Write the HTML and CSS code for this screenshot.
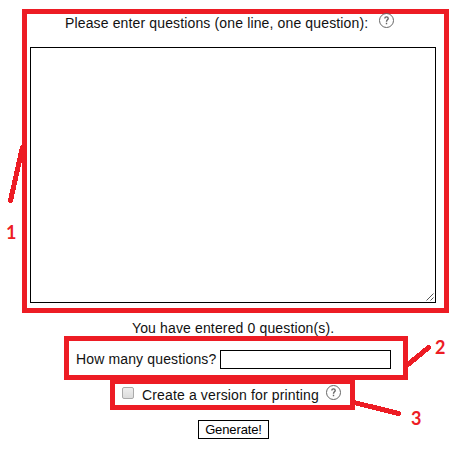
FILE: index.html
```html
<!DOCTYPE html>
<html lang="en">
<head>
<meta charset="utf-8">
<title>Question generator</title>
<link rel="stylesheet" href="styles.css">
</head>
<body>
<main class="form">
  <section class="frame frame-questions">
    <div class="row title">
      <label for="questions">Please enter questions (one line, one question):</label>
      <svg class="help" width="15" height="15" viewBox="0 0 15 15"><circle cx="7.500" cy="7.500" r="7"/><path d="M5.800 5.400C5.800 3.400 9.200 3.400 9.200 5.400C9.200 6.900 7.500 6.800 7.500 8.700M7.500 9.800V11.200"/></svg>
    </div>
    <div class="editor">
      <textarea id="questions" class="questions"></textarea>
      <svg class="grip" width="8" height="8" viewBox="0 0 8 8"><path d="M.5 7.5L7.5 .5M4.5 7.5L7.5 4.5"/></svg>
    </div>
  </section>
  <p class="count">You have entered 0 question(s).</p>
  <section class="frame frame-amount">
    <label for="amount">How many questions?</label>
    <input id="amount" class="amount" type="text">
  </section>
  <section class="frame frame-print">
    <input id="print" class="check" type="checkbox">
    <label for="print">Create a version for printing</label>
    <svg class="help" width="15" height="15" viewBox="0 0 15 15"><circle cx="7.500" cy="7.500" r="7"/><path d="M5.800 5.400C5.800 3.400 9.200 3.400 9.200 5.400C9.200 6.900 7.500 6.800 7.500 8.700M7.500 9.800V11.200"/></svg>
  </section>
  <button class="generate" type="button">Generate!</button>
</main>
<svg class="pointers" width="469" height="452" viewBox="0 0 469 452"><path d="M22.500 147L10.500 200.500M408 364.500L428.500 347.500M354 402.500L398.500 413.500"/></svg>
<span class="mark mark-1">1</span>
<span class="mark mark-2">2</span>
<span class="mark mark-3">3</span>
</body>
</html>
```
FILE: styles.css
```css
* { box-sizing: border-box; }
body {
  margin: 0;
  width: 469px;
  height: 452px;
  position: relative;
  overflow: hidden;
  background: #fff;
  color: #111;
  font: 14px/16px "Liberation Sans", Arial, sans-serif;
  letter-spacing: .14px;
}
.form { display: flex; flex-direction: column; align-items: flex-start; padding-top: 9px; }
.frame { border: 5px solid #ed1c24; display: flex; }
.frame-questions { flex-direction: column; width: 427px; height: 304px; margin-left: 22px; padding-left: 3px; }
.row { display: flex; }
.title { height: 33px; padding: 1px 0 0 35px; }
.title label { width: 305px; white-space: nowrap; }
.title .help { margin: -2px 0 0 9px; }
.help { flex: none; fill: none; stroke: #666; stroke-width: 1; }
.help path { stroke-width: 1.4; }
.editor { position: relative; width: 406px; height: 256px; }
.questions {
  display: block;
  width: 100%;
  height: 100%;
  border: 1px solid #000;
  resize: none;
  outline: 0;
}
.grip { position: absolute; right: 2px; bottom: 2px; fill: none; stroke: #555; stroke-width: 1; }
.count { margin: 7px 0 0 132px; height: 16px; }
.frame-amount { width: 344px; height: 44px; margin-left: 64px; padding: 10px 0 0 7px; white-space: nowrap; }
.frame-amount label { width: 144px; }
.amount { width: 171px; height: 19px; margin: -1px 0 0; border: 1px solid #000; padding: 0 2px; }
.frame-print { width: 245px; height: 31px; margin: -1px 0 0 110px; padding: 3px 0 0 7px; white-space: nowrap; }
.frame-print label { width: 177px; margin-left: 8px; }
.frame-print .help { margin: -2px 0 0 7px; }
.check {
  appearance: none;
  flex: none;
  width: 12px;
  height: 12px;
  margin: 0;
  border: 1px solid #aaa;
  border-radius: 2px;
  background: linear-gradient(#eee, #dcdcdc);
}
.generate {
  width: 71px;
  height: 19px;
  margin: 10px 0 0 198px;
  padding: 0;
  border: 1px solid #000;
  background: #fff;
  color: #000;
  font: 13px/16px "Liberation Sans", Arial, sans-serif;
  letter-spacing: -.12px;
}
.pointers { position: absolute; left: 0; top: 0; fill: none; stroke: #ed1c24; stroke-width: 5; stroke-linecap: round; shape-rendering: crispEdges; pointer-events: none; }
.mark { position: absolute; color: #ed1c24; font: bold 18px/20px Lato, sans-serif; letter-spacing: 0; }
.mark-1 { left: 6px; top: 222px; }
.mark-2 { left: 435px; top: 337px; }
.mark-3 { left: 411px; top: 408px; }
```
